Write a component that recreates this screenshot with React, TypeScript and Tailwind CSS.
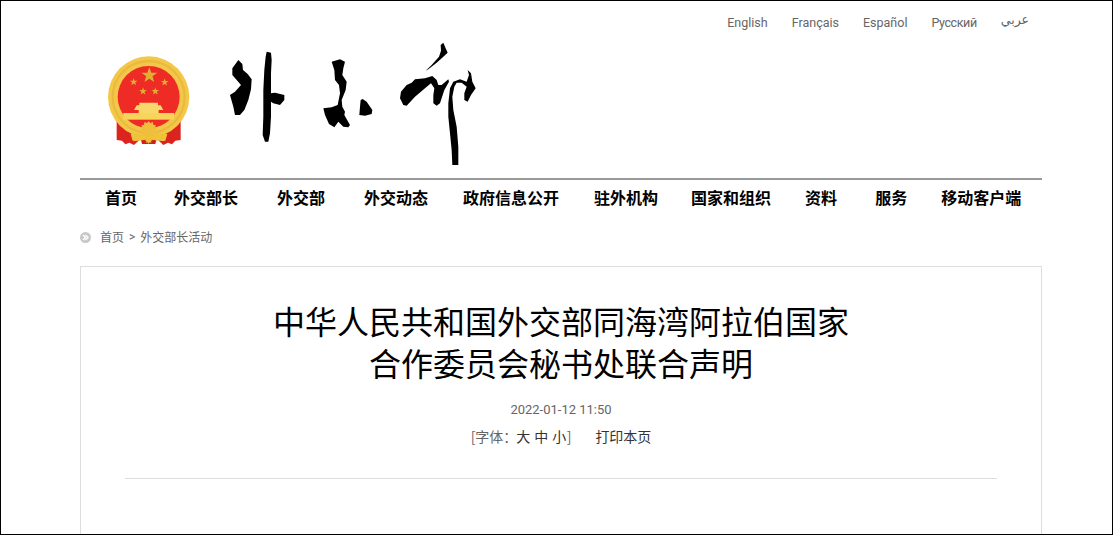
const cjk = "font-['Noto_Sans_CJK_SC','Noto_Sans',sans-serif]";

const languages = [
  { label: "English", cls: "" },
  { label: "Français", cls: "" },
  { label: "Español", cls: "" },
  { label: "Русский", cls: "tracking-[-0.4px]" },
  { label: "عربي", cls: "font-['DejaVu_Sans',sans-serif] -translate-y-[3px]" },
];

const navItems = [
  { label: "首页", cls: "ml-[25px]" },
  { label: "外交部长", cls: "ml-[37px]" },
  { label: "外交部", cls: "ml-[39px]" },
  { label: "外交动态", cls: "ml-[39px]" },
  { label: "政府信息公开", cls: "ml-[35px]" },
  { label: "驻外机构", cls: "ml-[35px]" },
  { label: "国家和组织", cls: "ml-[33px]" },
  { label: "资料", cls: "ml-[34px]" },
  { label: "服务", cls: "ml-[38px]" },
  { label: "移动客户端", cls: "ml-[34px]" },
];

function star(cx: number, cy: number, r: number, n = 5, inner = 0.4) {
  const pts: string[] = [];
  for (let i = 0; i < n * 2; i++) {
    const rad = i % 2 === 0 ? r : r * inner;
    const a = (Math.PI / n) * i - Math.PI / 2;
    pts.push(`${(cx + rad * Math.cos(a)).toFixed(1)},${(cy + rad * Math.sin(a)).toFixed(1)}`);
  }
  return pts.join(" ");
}

function Emblem() {
  return (
    <svg width="120" height="130" viewBox="0 0 360 390" className="shrink-0">
      <polygon points="80,262 130,296 152,326 132,345 118,338 106,343 96,332 80,330" fill="#dc241f" />
      <polygon points="272,262 222,296 200,326 220,345 234,338 246,343 256,332 272,330" fill="#dc241f" />
      <polygon points="150,320 202,320 196,342 156,342" fill="#d3201c" />
      <circle cx="176" cy="201" r="122" fill="#f3c84a" />
      <circle cx="176" cy="201" r="108" fill="none" stroke="#e3ae2e" strokeWidth="7" opacity="0.55" />
      <circle cx="176" cy="201" r="93" fill="#ee2b24" />
      <polygon points={star(178, 136, 25)} fill="#e2ad33" />
      <polygon points={star(131, 156, 12)} fill="#e2ad33" />
      <polygon points={star(224, 157, 12)} fill="#e2ad33" />
      <polygon points={star(159, 184, 12)} fill="#e2ad33" />
      <polygon points={star(196, 184, 12)} fill="#e2ad33" />
      <path d="M148 218 H204 V226 H212 L220 240 H206 V250 H146 V240 H132 L140 226 H148 Z" fill="#f8d86a" />
      <rect x="100" y="249" width="152" height="20" fill="#f8d458" />
      <path d="M122 312 C140 312 156 306 176 312 C196 306 212 312 232 312 L226 332 C206 336 192 326 176 330 C160 326 146 336 128 332 Z" fill="#f0c23a" />
      <polygon points={star(176, 298, 25, 12, 0.78)} fill="#efbf3b" />
      <polygon points={star(176, 330, 12, 8, 0.6)} fill="#efbf3b" />
    </svg>
  );
}

// brush logo, traced off the reference crops (3x), so the coords stay in crop space
function BrushLogo() {
  return (
    <svg width="270" height="135" viewBox="220 35 270 135" className="mt-[5px] shrink-0" fill="#000">
      <g transform="translate(225 50) scale(0.3333)">
        <polygon points="40,30 52,42 54,60 68,72 80,88 78,118 70,150 58,180 45,195 30,195 25,170 15,135 30,125 48,105 35,90 22,75 22,55" />
        <polygon points="125,5 138,8 140,30 138,70 138,130 150,128 178,135 178,150 165,165 145,160 138,155 138,200 135,250 130,275 120,275 113,255 115,200 115,120 118,60 122,20" />
      </g>
      <g transform="translate(315 50) scale(0.3333)">
        <polygon points="50,35 75,28 90,35 85,55 82,75 95,95 92,120 80,150 82,170 90,185 88,195 105,225 100,232 85,230 70,215 58,232 42,222 30,195 25,175 50,172 68,165 75,130 72,105 60,90 58,60" />
        <polygon points="143,147 155,155 172,180 170,192 150,197 133,195 135,170 137,150" />
      </g>
      <g transform="translate(395 40) scale(0.3333)">
        <polygon points="145,8 152,25 158,38 145,50 125,68 100,88 92,92 110,75 132,50 138,32 137,15" />
        <polygon points="60,118 90,115 112,108 125,120 130,135 140,135 160,118 162,125 148,150 135,190 125,197 115,190 115,165 118,145 108,130 90,145 60,170 35,197 25,195 15,175 18,155 35,135 50,128" />
        <polygon points="165,145 175,125 195,118 215,125 222,105 218,90 228,100 232,125 242,145 228,165 218,185 208,180 208,160 215,140 200,128 185,128 178,140 172,170 175,210 185,260 190,320 190,375 172,375 170,330 165,280 160,230 160,190" />
      </g>
    </svg>
  );
}

export default function App() {
  return (
    <div className={`h-[535px] w-[1113px] overflow-hidden border border-black bg-white ${cjk}`}>
      <div className="ml-[79px] w-[962px]">
        <div className="flex h-[29px] items-end justify-end gap-[24px] pr-[13px] font-['Roboto',sans-serif] text-[12.5px] leading-[14px] text-[#666]">
          {languages.map((l) => (
            <a key={l.label} className={l.cls}>{l.label}</a>
          ))}
        </div>

        <div className="flex h-[148px] items-start gap-[10px] pl-[10px]">
          <Emblem />
          <BrushLogo />
        </div>

        <nav className="flex h-[38px] items-center border-t-2 border-[#999] pb-[2px] text-[16px] font-bold text-black">
          {navItems.map((n) => (
            <a key={n.label} className={`whitespace-nowrap leading-none ${n.cls}`}>{n.label}</a>
          ))}
        </nav>

        <div className="mb-[8px] flex h-[42px] items-center text-[12px] text-[#666]">
          <span className="flex h-[11px] w-[11px] items-center justify-center rounded-full bg-[#c8c8c8]">
            <svg width="7" height="7" viewBox="0 0 7 7" fill="none" stroke="#fff" strokeWidth="1.4">
              <path d="M1 1l2.5 2.5L1 6M3.5 1L6 3.5 3.5 6" />
            </svg>
          </span>
          <a className="ml-[9px]">首页</a>
          <span className="mx-[5px] font-['Roboto',sans-serif]">&gt;</span>
          <a>外交部长活动</a>
        </div>

        <div className="h-[300px] border border-[#ddd] px-[44px]">
          <h1 className="pt-[32px] text-center text-[32px] font-normal leading-[42px] text-black">
            中华人民共和国外交部同海湾阿拉伯国家
            <br />
            合作委员会秘书处联合声明
          </h1>
          <div className="mt-[17px] text-center font-['Roboto',sans-serif] text-[13px] leading-[20px] text-[#666]">
            2022-01-12 11:50
          </div>
          <div className="mt-[6px] flex justify-center text-[14px] leading-[20px] text-[#666]">
            <span>[字体：</span>
            <span className="-ml-[1px] tracking-[0.4px] text-[#333]">大 中 小</span>
            <span>]</span>
            <span className="ml-[24px] text-[#333]">打印本页</span>
          </div>
          <div className="mt-[32px] border-t border-[#ddd]" />
        </div>
      </div>
    </div>
  );
}
